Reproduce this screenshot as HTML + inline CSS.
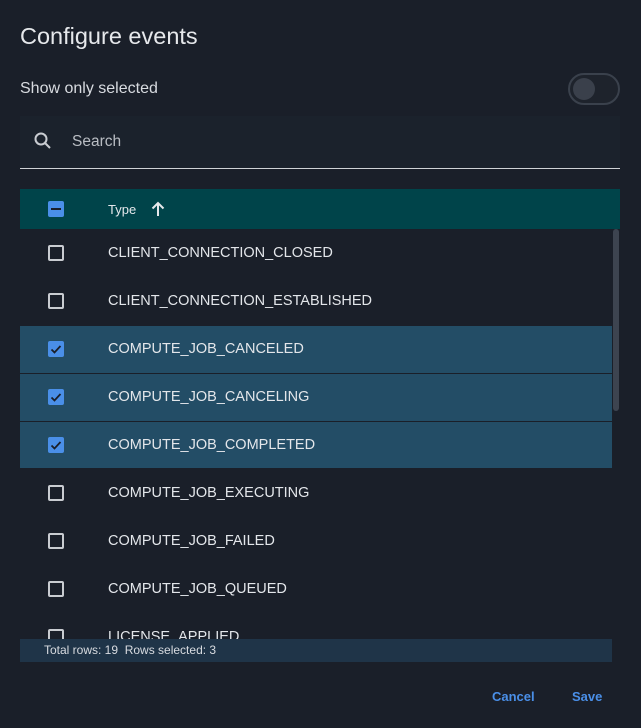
<!DOCTYPE html>
<html><head><style>
*{margin:0;padding:0;box-sizing:border-box}
body{width:641px;height:728px;background:#1a1f29;font-family:"Liberation Sans",sans-serif;color:#e3e6ea;position:relative;overflow:hidden}
.abs{position:absolute}
.cb{position:absolute;left:48px;width:16px;height:16px;border:2px solid #c9ccd1;border-radius:2px}
.cb.on{background:#4a8fe8;border:none}
.row{position:absolute;left:20px;width:592px;height:48px}
.row.sel{background:#234d66}
.row span{position:absolute;left:88px;top:0;line-height:48px;font-size:14.5px;color:#e3e6ea}
.row .cb{left:28px;top:16px}
</style></head><body>
<div class="abs" style="left:20px;top:23px;font-size:23.5px;color:#e6e8eb">Configure events</div>
<div class="abs" style="left:20px;top:80px;font-size:16px;color:#d8dbe0">Show only selected</div>
<div class="abs" style="left:568px;top:73px;width:52px;height:32px;border:2px solid #3a414c;border-radius:16px;background:#1e232c"></div>
<div class="abs" style="left:573px;top:78px;width:22px;height:22px;border-radius:50%;background:#3a404b"></div>
<div class="abs" style="left:20px;top:116px;width:600px;height:53px;background:#1b222c;border-bottom:1px solid #cfd2d6"></div>
<svg class="abs" style="left:33px;top:131px" width="20" height="20" viewBox="0 0 20 20"><circle cx="8" cy="8" r="5.5" stroke="#c9ccd1" stroke-width="2" fill="none"/><path d="M12 12l5 5" stroke="#c9ccd1" stroke-width="2"/></svg>
<div class="abs" style="left:72px;top:133px;font-size:15.5px;color:#b9bdc3">Search</div>
<div class="abs" style="left:20px;top:189px;width:600px;height:40px;background:#00444a"></div>
<div class="abs" style="left:48px;top:201px;width:16px;height:16px;background:#4a8fe8;border-radius:2px"><div style="position:absolute;left:3px;top:7px;width:10px;height:2px;background:#1a1f29"></div></div>
<div class="abs" style="left:108px;top:202px;font-size:13px;color:#e3e6ea">Type</div>
<svg class="abs" style="left:149px;top:200px" width="18" height="18" viewBox="0 0 18 18"><path d="M9 16V3M3.5 8.5L9 3l5.5 5.5" stroke="#e6e8eb" stroke-width="2" fill="none"/></svg>
<div class="row" style="top:229px"><div class="cb"></div><span>CLIENT_CONNECTION_CLOSED</span></div>
<div class="row" style="top:277px"><div class="cb"></div><span>CLIENT_CONNECTION_ESTABLISHED</span></div>
<div class="row sel" style="top:326px;height:47px"><div class="cb on" style="top:15px"><svg width="16" height="16"><path d="M3.5 8.5l3 3 6-6.5" stroke="#1a1f29" stroke-width="1.8" fill="none"/></svg></div><span style="line-height:47px">COMPUTE_JOB_CANCELED</span></div>
<div class="row sel" style="top:374px;height:47px"><div class="cb on" style="top:15px"><svg width="16" height="16"><path d="M3.5 8.5l3 3 6-6.5" stroke="#1a1f29" stroke-width="1.8" fill="none"/></svg></div><span style="line-height:47px">COMPUTE_JOB_CANCELING</span></div>
<div class="row sel" style="top:422px;height:46px"><div class="cb on" style="top:15px"><svg width="16" height="16"><path d="M3.5 8.5l3 3 6-6.5" stroke="#1a1f29" stroke-width="1.8" fill="none"/></svg></div><span style="line-height:46px">COMPUTE_JOB_COMPLETED</span></div>
<div class="row" style="top:469px"><div class="cb"></div><span>COMPUTE_JOB_EXECUTING</span></div>
<div class="row" style="top:517px"><div class="cb"></div><span>COMPUTE_JOB_FAILED</span></div>
<div class="row" style="top:565px"><div class="cb"></div><span>COMPUTE_JOB_QUEUED</span></div>
<div class="row" style="top:613px;height:26px;overflow:hidden"><div class="cb"></div><span>LICENSE_APPLIED</span></div>
<div class="abs" style="left:613px;top:229px;width:6px;height:182px;background:#3d4450;border-radius:3px"></div>
<div class="abs" style="left:20px;top:639px;width:592px;height:23px;background:#1f3448;font-size:12px;line-height:23px;padding-left:24px;color:#d8dbe0">Total rows: 19&nbsp; Rows selected: 3</div>
<div class="abs" style="left:492px;top:689px;font-size:13px;font-weight:bold;color:#4a8fe8">Cancel</div>
<div class="abs" style="left:572px;top:689px;font-size:13px;font-weight:bold;color:#4a8fe8">Save</div>
</body></html>
